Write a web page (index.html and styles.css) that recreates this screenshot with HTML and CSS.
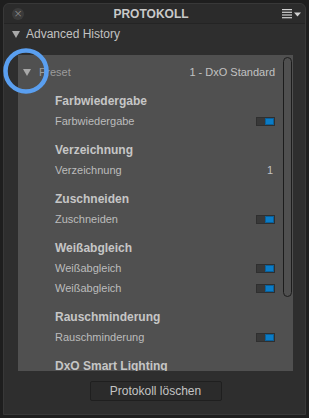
FILE: index.html
```html
<!DOCTYPE html>
<html>
<head>
<meta charset="utf-8">
<link rel="stylesheet" href="styles.css">
</head>
<body>
<div class="window">
  <div class="titlebar">
    <span class="close">×</span>
    <span class="title">PROTOKOLL</span>
    <svg class="menu" width="20" height="10" viewBox="0 0 20 10">
      <rect x="0" y="0" width="10" height="1.2" fill="#d0d0d0"/>
      <rect x="0" y="2.7" width="10" height="1.2" fill="#d0d0d0"/>
      <rect x="0" y="5.4" width="10" height="1.2" fill="#d0d0d0"/>
      <rect x="0" y="8.1" width="10" height="1.2" fill="#d0d0d0"/>
      <polygon points="12,3.6 19,3.6 15.5,7.4" fill="#d0d0d0"/>
    </svg>
  </div>
  <div class="section">
    <span class="tri"></span>
    <span>Advanced History</span>
  </div>
  <div class="list">
    <div class="preset">
      <span class="tri small"></span>
      <span class="preset-label">Preset</span>
      <span class="preset-value">1 - DxO Standard</span>
    </div>
    <div class="group">
      <div class="heading">Farbwiedergabe</div>
      <div class="item"><span>Farbwiedergabe</span><span class="toggle"><i></i></span></div>
    </div>
    <div class="group">
      <div class="heading">Verzeichnung</div>
      <div class="item"><span>Verzeichnung</span><span class="val">1</span></div>
    </div>
    <div class="group">
      <div class="heading">Zuschneiden</div>
      <div class="item"><span>Zuschneiden</span><span class="toggle"><i></i></span></div>
    </div>
    <div class="group">
      <div class="heading">Weißabgleich</div>
      <div class="item"><span>Weißabgleich</span><span class="toggle"><i></i></span></div>
      <div class="item"><span>Weißabgleich</span><span class="toggle"><i></i></span></div>
    </div>
    <div class="group">
      <div class="heading">Rauschminderung</div>
      <div class="item"><span>Rauschminderung</span><span class="toggle"><i></i></span></div>
    </div>
    <div class="group">
      <div class="heading">DxO Smart Lighting</div>
    </div>
    <div class="scrollbar"></div>
  </div>
  <div class="footer">
    <button class="btn">Protokoll löschen</button>
  </div>
</div>
<svg class="highlight" width="52" height="52" viewBox="0 0 52 52">
  <circle cx="26" cy="26" r="20.5" fill="none" stroke="#5a9ff0" stroke-width="4.5"/>
</svg>
</body>
</html>
```

FILE: styles.css
```css
html, body {
  margin: 0;
  padding: 0;
}
body {
  width: 309px;
  height: 418px;
  background: #1e1e1e;
  font-family: "Liberation Sans", Arial, sans-serif;
  position: relative;
  overflow: hidden;
}
.window {
  position: absolute;
  left: 3px;
  top: 3px;
  width: 303px;
  height: 412px;
  box-sizing: border-box;
  background: #2e2e2e;
  border: 1px solid #383838;
  border-radius: 6px 6px 0 0;
  display: flex;
  flex-direction: column;
}
.titlebar {
  height: 19px;
  flex: none;
  display: flex;
  align-items: center;
  border-bottom: 1px solid #242424;
  background: #2b2b2b;
  border-radius: 6px 6px 0 0;
  position: relative;
}
.close {
  width: 12px;
  height: 12px;
  border-radius: 50%;
  background: #3b3b3b;
  color: #9a9a9a;
  font-size: 11px;
  line-height: 12px;
  text-align: center;
  margin-left: 8px;
  font-family: "DejaVu Sans", sans-serif;
  font-weight: 200;
}
.title {
  flex: 1;
  text-align: center;
  font-weight: bold;
  font-size: 12px;
  color: #c9c9c9;
  margin-right: 4px;
}
.menu {
  margin-right: 3px;
  margin-top: 1px;
}
.section {
  height: 20px;
  display: flex;
  align-items: center;
  font-size: 12px;
  color: #c2c2c2;
  padding-left: 8px;
  flex: none;
}
.tri {
  width: 0;
  height: 0;
  border-left: 4px solid transparent;
  border-right: 4px solid transparent;
  border-top: 7px solid #a8a8a8;
  margin-right: 6px;
}
.list {
  margin: 11px 12px 0 14px;
  height: 316px;
  flex: none;
  background: #505050;
  box-sizing: border-box;
  padding: 7px 18px 0 37px;
  overflow: hidden;
  position: relative;
}
.preset {
  height: 20px;
  display: flex;
  align-items: center;
  font-size: 11px;
  margin-left: -32px;
}
.tri.small {
  margin-right: 8px;
  margin-top: 1px;
}
.preset-label {
  color: #9c9c9c;
  flex: 1;
}
.preset-value {
  color: #c2c2c2;
}
.group {
  margin-top: 10px;
}
.heading {
  height: 19px;
  line-height: 19px;
  font-size: 12px;
  font-weight: bold;
  color: #c6c6c6;
}
.item {
  height: 20px;
  display: flex;
  align-items: center;
  justify-content: space-between;
  font-size: 11px;
  color: #bcbcbc;
}
.val {
  color: #c2c2c2;
  margin-right: 2px;
}
.toggle {
  width: 19px;
  height: 9px;
  background: #383838;
  box-sizing: border-box;
  border: 1px solid #2f2f2f;
  display: flex;
  justify-content: flex-end;
}
.toggle i {
  display: block;
  width: 9px;
  height: 7px;
  background: #0b7cc6;
  box-shadow: inset 0 0 0 1px #0a5f98;
}
.scrollbar {
  position: absolute;
  left: 265px;
  top: 2px;
  width: 9px;
  height: 240px;
  box-sizing: border-box;
  border: 1px solid #1c1c1c;
  border-radius: 5px;
}
.footer {
  flex: 1;
  display: flex;
  justify-content: center;
  padding-top: 10px;
  padding-left: 2px;
}
.btn {
  width: 132px;
  height: 20px;
  background: #2b2b2b;
  border: 1px solid #1f1f1f;
  border-radius: 2px;
  color: #c4c4c4;
  font-family: "Liberation Sans", Arial, sans-serif;
  font-size: 12px;
  padding: 0;
}
.highlight {
  position: absolute;
  left: 0;
  top: 45px;
}
```
